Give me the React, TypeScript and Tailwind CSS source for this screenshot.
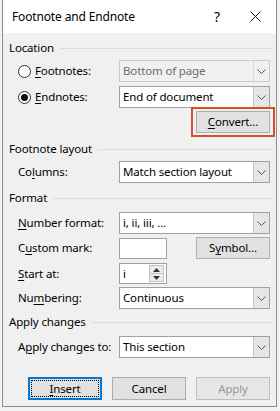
import React from "react";

const Chevron = () => (
  <svg width="9" height="5" viewBox="0 0 9 5" className="block">
    <path d="M0.5 0.5 L4.5 4.5 L8.5 0.5" fill="none" stroke="#555" strokeWidth="1" />
  </svg>
);

function Select({ value, disabled }: { value: string; disabled?: boolean }) {
  return (
    <div
      className={
        "flex h-[22px] w-[151px] items-stretch border " +
        (disabled ? "border-[#cccccc] bg-[#f0f0f0] text-[#6d6d6d]" : "border-[#a0a0a0] bg-white text-black")
      }
    >
      <div className="flex flex-1 items-center pl-[3px] whitespace-nowrap">{value}</div>
      <div
        className={
          "flex w-[16px] items-center justify-center border-l " +
          (disabled ? "border-[#dadada] bg-[#f0f0f0]" : "border-[#c8c8c8] bg-[#e6e6e6]")
        }
      >
        <Chevron />
      </div>
    </div>
  );
}

function Header({ text, className }: { text: string; className?: string }) {
  return (
    <div className={"flex h-[16px] items-center pl-[6px] pr-[4px] " + (className ?? "")}>
      <span className="whitespace-nowrap text-black">{text}</span>
      <div className="ml-[6px] h-px flex-1 bg-[#dcdcdc]" />
    </div>
  );
}

function Btn({ children, className, disabled }: { children: React.ReactNode; className?: string; disabled?: boolean }) {
  return (
    <div
      className={
        "flex h-[22px] w-[74px] items-center justify-center border " +
        (disabled ? "border-[#bfbfbf] bg-[#e6e6e6] text-[#9a9a9a] " : "border-[#adadad] bg-[#e1e1e1] text-black ") +
        (className ?? "")
      }
    >
      {children}
    </div>
  );
}

function Radio({ checked }: { checked?: boolean }) {
  return (
    <div className="flex h-[13px] w-[13px] items-center justify-center rounded-full border border-[#333] bg-white">
      {checked && <div className="h-[7px] w-[7px] rounded-full bg-[#111]" />}
    </div>
  );
}

const U = ({ children }: { children: React.ReactNode }) => (
  <span className="underline decoration-1 underline-offset-2">{children}</span>
);

export default function App() {
  return (
    <div className="h-[411px] w-[280px] bg-[#f3f3f3] pl-[2px] text-[11.5px] leading-[16px] tracking-[-0.15px] text-black font-['Segoe_UI','Noto_Sans',sans-serif]">
      <div className="flex h-[407px] w-[275px] flex-col border-x border-b border-[#8c8c8c] bg-[#f0f0f0]">
        {/* Title bar */}
        <div className="flex h-[33px] items-center bg-white">
          <div className="pl-[9px] text-[12px]">Footnote and Endnote</div>
          <div className="ml-auto mr-[30px] text-[14px]">?</div>
          <svg width="11" height="11" viewBox="0 0 11 11" className="mr-[15px]">
            <path d="M0.5 0.5 L10.5 10.5 M10.5 0.5 L0.5 10.5" stroke="#111" strokeWidth="1" />
          </svg>
        </div>

        {/* Location */}
        <Header text="Location" className="mt-[7px]" />
        <div className="mt-[4px] flex h-[22px] items-center">
          <div className="ml-[15px]">
            <Radio />
          </div>
          <span className="ml-[4px] w-[84px]">
            <U>F</U>ootnotes:
          </span>
          <Select value="Bottom of page" disabled />
        </div>
        <div className="mt-[4px] flex h-[22px] items-center">
          <div className="ml-[15px]">
            <Radio checked />
          </div>
          <span className="ml-[4px] w-[84px]">
            <U>E</U>ndnotes:
          </span>
          <Select value="End of document" />
        </div>
        <div className="mt-[3px] flex h-[22px] justify-end pr-[6px]">
          <div className="relative">
            <Btn>
              <span>
                <U>C</U>onvert...
              </span>
            </Btn>
            <div className="absolute -bottom-[4px] -left-[5px] -right-[5px] -top-[4px] border-2 border-[#d4502a]" />
          </div>
        </div>

        {/* Footnote layout */}
        <Header text="Footnote layout" className="mt-[8px]" />
        <div className="mt-[4px] flex h-[22px] items-center">
          <span className="ml-[15px] w-[101px]">
            Co<U>l</U>umns:
          </span>
          <Select value="Match section layout" />
        </div>

        {/* Format */}
        <Header text="Format" className="mt-[7px]" />
        <div className="mt-[6px] flex h-[22px] items-center">
          <span className="ml-[15px] w-[101px]">
            <U>N</U>umber format:
          </span>
          <Select value="i, ii, iii, ..." />
        </div>
        <div className="mt-[3px] flex h-[22px] items-center">
          <span className="ml-[15px] w-[101px]">
            C<U>u</U>stom mark:
          </span>
          <div className="h-[21px] w-[48px] border border-[#a0a0a0] bg-white" />
          <div className="ml-[29px]">
            <Btn>
              <span>
                S<U>y</U>mbol...
              </span>
            </Btn>
          </div>
        </div>
        <div className="mt-[4px] flex h-[21px] items-center">
          <span className="ml-[15px] w-[101px]">
            <U>S</U>tart at:
          </span>
          <div className="flex h-[21px] w-[48px] items-stretch border border-[#a0a0a0] bg-white">
            <div className="flex flex-1 items-center pl-[3px]">i</div>
            <div className="my-[1px] mr-[2px] flex w-[15px] flex-col border border-[#c4c4c4] bg-[#ececec]">
              <div className="flex flex-1 items-center justify-center border-b border-[#c4c4c4]">
                <svg width="7" height="4" viewBox="0 0 7 4">
                  <path d="M0 4 L3.5 0 L7 4 Z" fill="#333" />
                </svg>
              </div>
              <div className="flex flex-1 items-center justify-center">
                <svg width="7" height="4" viewBox="0 0 7 4">
                  <path d="M0 0 L3.5 4 L7 0 Z" fill="#333" />
                </svg>
              </div>
            </div>
          </div>
        </div>
        <div className="mt-[3px] flex h-[22px] items-center">
          <span className="ml-[15px] w-[101px]">
            Nu<U>m</U>bering:
          </span>
          <Select value="Continuous" />
        </div>

        {/* Apply changes */}
        <Header text="Apply changes" className="mt-[5px]" />
        <div className="mt-[6px] flex h-[22px] items-center">
          <span className="ml-[15px] w-[101px]">
            A<U>p</U>ply changes to:
          </span>
          <Select value="This section" />
        </div>

        {/* Buttons */}
        <div className="mt-[19px] flex h-[23px] items-center justify-end gap-[10px] pr-[6px]">
          <div className="flex h-[23px] w-[74px] items-center justify-center border-2 border-[#0078d7] bg-[#e1e1e1]">
            <div className="flex h-[17px] w-[68px] items-center justify-center border border-dotted border-black">
              <span>
                <U>I</U>nsert
              </span>
            </div>
          </div>
          <Btn className="h-[23px]">Cancel</Btn>
          <Btn className="h-[23px]" disabled>
            Apply
          </Btn>
        </div>
      </div>
    </div>
  );
}
